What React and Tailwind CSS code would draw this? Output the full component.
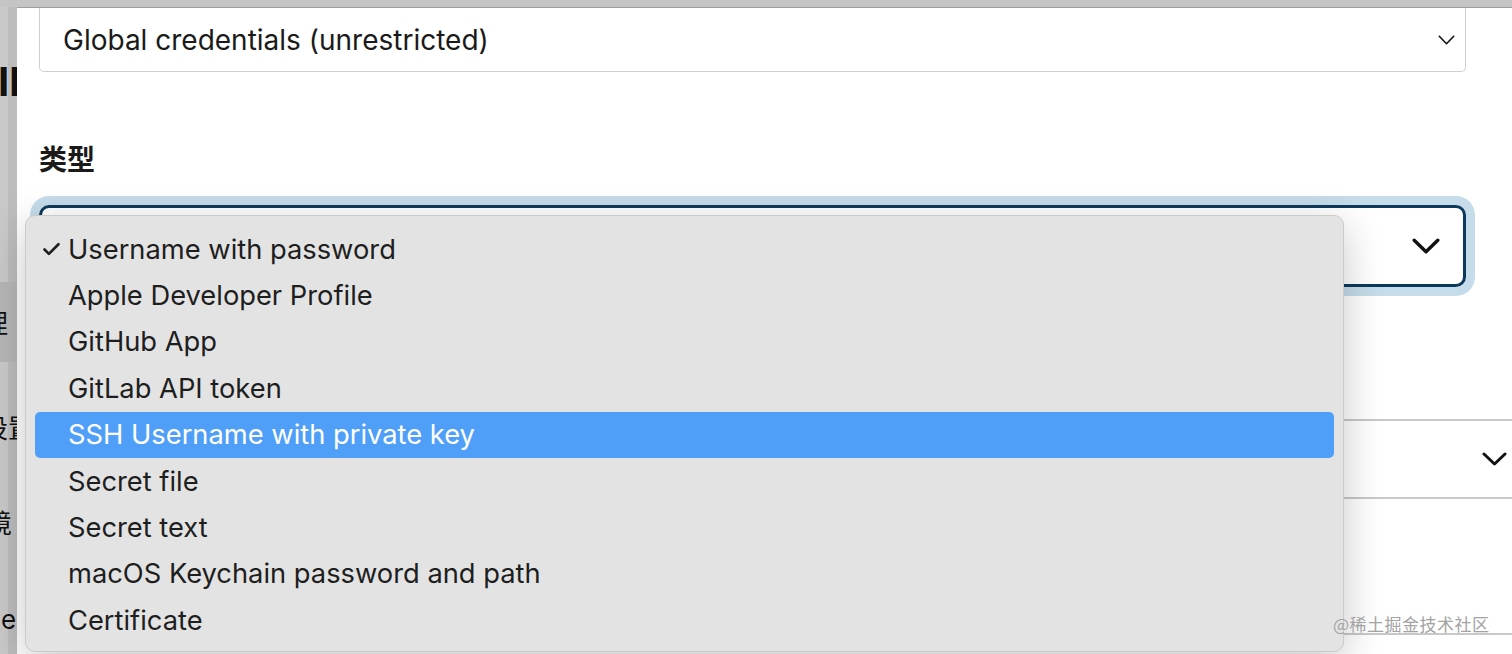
import { Check } from "lucide-react";

const latin = { fontFamily: "Inter, 'Liberation Sans', 'Noto Sans CJK SC', sans-serif" };
const cjk = { fontFamily: "'Noto Sans CJK SC', 'Noto Sans', sans-serif" };

const options = [
  "Username with password",
  "Apple Developer Profile",
  "GitHub App",
  "GitLab API token",
  "SSH Username with private key",
  "Secret file",
  "Secret text",
  "macOS Keychain password and path",
  "Certificate",
];

function Chevron({ w, h, stroke }) {
  return (
    <svg width={w} height={h} viewBox={`0 0 ${w} ${h}`} fill="none">
      <polyline
        points={`${stroke / 2 + 0.5},${stroke / 2 + 0.5} ${w / 2},${h - stroke / 2 - 0.5} ${w - stroke / 2 - 0.5},${stroke / 2 + 0.5}`}
        stroke="#111"
        strokeWidth={stroke}
        strokeLinecap="round"
        strokeLinejoin="round"
      />
    </svg>
  );
}

function Sidebar() {
  // the page behind the dialog, only its right edge is visible
  return (
    <div className="w-[17px] shrink-0 overflow-hidden bg-linear-to-r from-[#c9c9c9] from-[47%] to-[#bdbdbd] to-[47%] text-[#111]" style={cjk}>
      <div className="h-[55px]" />
      <div className="h-[40px] overflow-hidden flex items-center">
        <span className="text-[40px] font-bold leading-none whitespace-nowrap -ml-[2px]" style={latin}>
          Il
        </span>
      </div>
      <div className="h-[180px]" />
      <div className="h-[80px] bg-[#b7b7b7] flex items-center overflow-hidden">
        <span className="text-[26px] leading-none whitespace-nowrap -ml-[18px]">理</span>
      </div>
      <div className="h-[45px]" />
      <div className="h-[40px] flex items-center overflow-hidden">
        <span className="text-[26px] leading-none whitespace-nowrap -ml-[18px]">设置</span>
      </div>
      <div className="h-[55px]" />
      <div className="h-[40px] flex items-center overflow-hidden">
        <span className="text-[26px] leading-none whitespace-nowrap -ml-[40px]">环境</span>
      </div>
      <div className="h-[58px]" />
      <div className="h-[40px] flex items-center overflow-hidden">
        <span className="text-[26px] leading-none whitespace-nowrap -ml-[50px]" style={latin}>
          Node
        </span>
      </div>
    </div>
  );
}

export default function App() {
  return (
    <div className="relative w-[1512px] h-[654px] overflow-hidden bg-[#c5c5c5]" style={latin}>
      <div className="h-[7px]" />
      <div className="flex h-[647px]">
        <Sidebar />
        <div className="flex-1 bg-white border-t border-[#9f9f9f] overflow-hidden">
          <div className="pl-[22px]">
            <div className="w-[1427px] h-[64px] border border-t-0 border-[#cfcfcf] rounded-b-[5px] flex items-center justify-between pl-[23px] pr-[10px]">
              <span className="text-[28px] text-[#1a1a1a]">Global credentials (unrestricted)</span>
              <Chevron w={17} h={10} stroke={1.6} />
            </div>

            <div className="mt-[66px] h-[40px] flex items-center text-[28px] font-semibold text-[#1a1a1a]" style={cjk}>
              类型
            </div>

            <div className="mt-[27px] w-[1427px] h-[82px] rounded-[10px] border-[3px] border-[#0d3a5c] ring-[9px] ring-[#c6dcea] flex items-center justify-end pr-[23px]">
              <Chevron w={28} h={16} stroke={3.4} />
            </div>

            <div className="mt-[132px] w-[1500px] h-[80px] border-y-2 border-[#c8c8c8] flex items-center justify-end pr-[32px]">
              <Chevron w={25} h={14} stroke={3} />
            </div>

            <div className="mt-[134px] w-[1500px] h-[40px] border-t-2 border-[#c8c8c8]" />
          </div>
        </div>
      </div>

      {/* native select popup */}
      <div className="absolute left-[25px] top-[215px] w-[1319px] h-[437px] rounded-[10px] bg-[#e3e3e3] border border-[#cbcbcb] shadow-[0_10px_40px_rgba(0,0,0,0.22)] px-[9px] py-[10px]">
        {options.map((label, i) => {
          const selected = i === 4;
          return (
            <div
              key={label}
              className={
                "h-[46.4px] rounded-[5px] flex items-center " +
                (selected ? "bg-[#4f9ff9] text-white" : "text-[#1e1e1e]")
              }
            >
              <span className="w-[33px] pl-[6px] flex items-center">
                {i === 0 && <Check size={21} strokeWidth={3} />}
              </span>
              <span className="text-[27.3px] leading-none">{label}</span>
            </div>
          );
        })}
      </div>

      <div className="absolute left-[1333px] top-[611px] text-[17px] text-[#a3a3a3] tracking-[0.5px]" style={cjk}>
        @稀土掘金技术社区
      </div>
    </div>
  );
}
